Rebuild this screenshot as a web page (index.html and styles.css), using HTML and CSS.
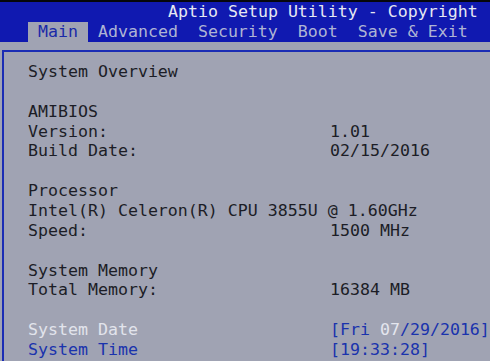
FILE: index.html
```html
<!DOCTYPE html>
<html lang="en">
<head>
    <meta charset="UTF-8">
    <meta name="viewport" content="width=device-width, initial-scale=1.0">
    <title>Aptio Setup Utility</title>
    <link rel="stylesheet" href="styles.css">
</head>
<body>

    <div id="header">
        <div class="title">Aptio Setup Utility - Copyright</div>
        <div class="tabs">
            <span class="tab active">Main</span>
            <span class="tab">Advanced</span>
            <span class="tab">Security</span>
            <span class="tab">Boot</span>
            <span class="tab">Save &amp; Exit</span>
        </div>
    </div>

    <div id="panel">
        <div class="frame">
            <div class="row"><span class="label">System Overview</span></div>
            <div class="row blank"></div>

            <div class="row"><span class="label">AMIBIOS</span></div>
            <div class="row"><span class="label">Version:</span><span class="value">1.01</span></div>
            <div class="row"><span class="label">Build Date:</span><span class="value">02/15/2016</span></div>
            <div class="row blank"></div>

            <div class="row"><span class="label">Processor</span></div>
            <div class="row"><span class="label">Intel(R) Celeron(R) CPU 3855U @ 1.60GHz</span></div>
            <div class="row"><span class="label">Speed:</span><span class="value">1500 MHz</span></div>
            <div class="row blank"></div>

            <div class="row"><span class="label">System Memory</span></div>
            <div class="row"><span class="label">Total Memory:</span><span class="value">16384 MB</span></div>
            <div class="row blank"></div>

            <div class="row selected"><span class="label">System Date</span><span class="value field">[Fri <span class="cursor">07</span>/29/2016]</span></div>
            <div class="row editable"><span class="label">System Time</span><span class="value field">[19:33:28]</span></div>
        </div>
    </div>

</body>
</html>
```

FILE: styles.css
```css
html, body {
    height: 100%;
}

body {
    margin: 0;
    background-color: #05060c;
    font-family: 'DejaVu Sans Mono', 'Liberation Mono', monospace;
    font-size: 16.6px;
    overflow: hidden;
    display: flex;
    flex-direction: column;
}

#header {
    margin-top: 2px;
    background-color: #1019b0; /* BIOS blue */
    color: #e6e8f2;
}

.title {
    height: 20px;
    line-height: 20px;
    padding-left: 168px;
    white-space: nowrap;
}

.tabs {
    height: 20px;
    line-height: 20px;
    padding-left: 28px;
    display: flex;
    white-space: nowrap;
}

.tab {
    padding: 0 10px;
    color: #aeb4d4;
}

.tab.active {
    background-color: #a0a3b3;
    color: #1a2aa8;
}

#panel {
    flex: 1;
    min-height: 0;
    background-color: #a0a3b3; /* grey body */
    padding: 8px 0 0 2px;
    display: flex;
}

.frame {
    flex: 1;
    border-top: 2px solid #1a2cb4;
    border-left: 2px solid #1a2cb4;
    padding: 10px 0 0 24px;
    color: #1c1d26;
}

.row {
    display: flex;
    height: 19.86px;
    line-height: 19.86px;
    white-space: nowrap;
}

.label {
    width: 300px;
    flex-shrink: 0;
}

.value {
    padding-left: 2px;
}

.selected .label {
    color: #e2e4ec;
}

.editable .label,
.field {
    color: #1a33ad;
}

.cursor {
    color: #e4e6ee;
}
```
